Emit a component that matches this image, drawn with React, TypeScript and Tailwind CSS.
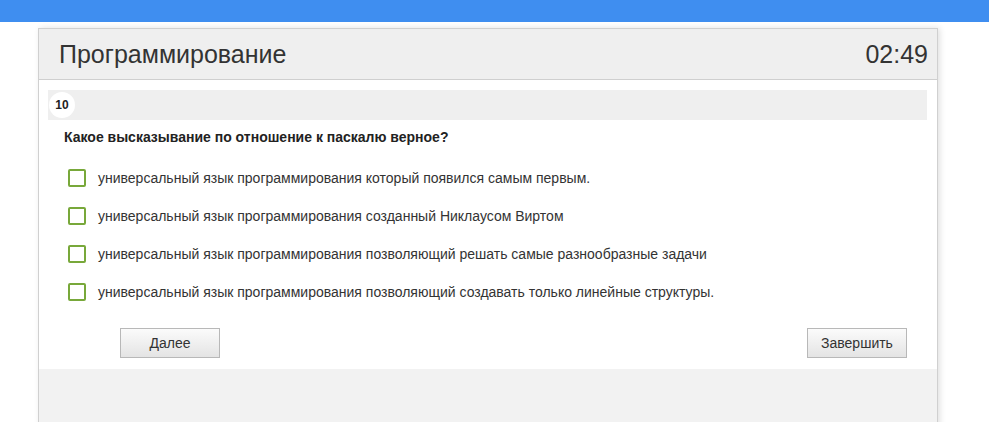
const options = [
  "универсальный язык программирования который появился самым первым.",
  "универсальный язык программирования созданный Никлаусом Виртом",
  "универсальный язык программирования позволяющий решать самые разнообразные задачи",
  "универсальный язык программирования позволяющий создавать только линейные структуры.",
];

export default function App() {
  return (
    <div className="min-h-screen bg-white font-['Liberation_Sans',Arial,sans-serif] text-[#333]">
      <div className="h-[22px] bg-[#3f8ef0]" />

      <div className="ml-[38px] mt-[6px] w-[900px] border border-[#d0d0d0] bg-white shadow-[2px_0_6px_rgba(0,0,0,0.12)]">
        {/* header */}
        <div className="flex h-[51px] items-center justify-between border-b border-[#cfcfcf] bg-[#efefef] pl-[20px] pr-[9px]">
          <h1 className="text-[25px] leading-none">Программирование</h1>
          <span className="text-[25px] leading-none">02:49</span>
        </div>

        {/* question */}
        <div className="px-[9px] pt-[10px]">
          <div className="mr-[1px] flex h-[30px] items-center bg-[#efefef] pl-[1px]">
            <span className="flex h-[26px] w-[26px] items-center justify-center rounded-full bg-white text-[12px] font-bold text-[#222]">
              10
            </span>
          </div>

          <p className="mt-[9px] pl-[16px] text-[14px] font-bold leading-[16px] text-[#222]">
            Какое высказывание по отношение к паскалю верное?
          </p>

          <ul className="mt-[14px]">
            {options.map((o) => (
              <li key={o} className="flex h-[38px] items-center pl-[20px]">
                <span className="h-[18px] w-[18px] rounded-[2px] border-2 border-[#78a83a] bg-white" />
                <span className="ml-[12px] text-[14px] leading-[16px] text-[#333]">{o}</span>
              </li>
            ))}
          </ul>

          <div className="mt-[17px] flex justify-between pb-[11px] pl-[72px] pr-[21px]">
            <button className="h-[30px] w-[100px] border border-[#b8b8b8] bg-gradient-to-b from-[#fbfbfb] to-[#e4e4e4] text-[14px] text-[#333]">
              Далее
            </button>
            <button className="h-[30px] w-[100px] border border-[#b8b8b8] bg-gradient-to-b from-[#fbfbfb] to-[#e4e4e4] text-[14px] text-[#333]">
              Завершить
            </button>
          </div>
        </div>

        {/* footer */}
        <div className="h-[70px] bg-[#f2f2f2]" />
      </div>
    </div>
  );
}
